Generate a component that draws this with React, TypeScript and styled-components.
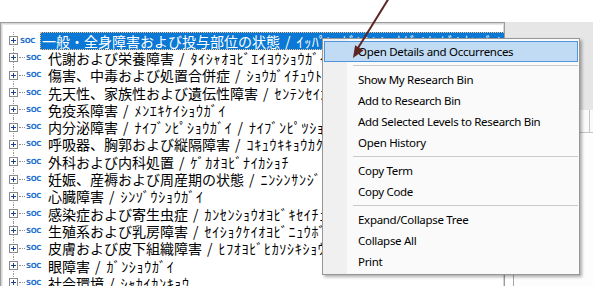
import styled, { createGlobalStyle } from "styled-components";

const GlobalStyle = createGlobalStyle`
  html, body {
    margin: 0;
    padding: 0;
    background: #fff;
  }
  body {
    width: 593px;
    height: 286px;
    overflow: hidden;
  }
`;

type Term = {
  name: string;
  kana: string[];
};

const terms: Term[] = [
  { name: "一般・全身障害および投与部位の状態", kana: ["ｲｯﾊﾟﾝ･ｾﾞﾝｼﾝｼｮｳｶﾞｲｵﾖﾋﾞﾄｳﾖﾌﾞｲﾉｼﾞｮｳﾀｲ"] },
  { name: "代謝および栄養障害", kana: ["ﾀｲｼｬｵﾖﾋﾞｴｲﾖｳｼｮｳｶﾞｲ"] },
  { name: "傷害、中毒および処置合併症", kana: ["ｼｮｳｶﾞｲﾁｭｳﾄﾞｸｵﾖﾋﾞｼｮﾁｶﾞｯﾍﾟｲｼｮｳ"] },
  { name: "先天性、家族性および遺伝性障害", kana: ["ｾﾝﾃﾝｾｲｶｿﾞｸｾｲｵﾖﾋﾞｲﾃﾞﾝｾｲｼｮｳｶﾞｲ"] },
  { name: "免疫系障害", kana: ["ﾒﾝｴｷｹｲｼｮｳｶﾞｲ"] },
  { name: "内分泌障害", kana: ["ﾅｲﾌﾞﾝﾋﾟｼｮｳｶﾞｲ", "ﾅｲﾌﾞﾝﾋﾟﾂｼｮｳｶﾞｲ"] },
  { name: "呼吸器、胸郭および縦隔障害", kana: ["ｺｷｭｳｷｷｮｳｶｸｵﾖﾋﾞｼﾞｭｳｶｸｼｮｳｶﾞｲ"] },
  { name: "外科および内科処置", kana: ["ｹﾞｶｵﾖﾋﾞﾅｲｶｼｮﾁ"] },
  { name: "妊娠、産褥および周産期の状態", kana: ["ﾆﾝｼﾝｻﾝｼﾞｮｸｵﾖﾋﾞｼｭｳｻﾝｷﾉｼﾞｮｳﾀｲ"] },
  { name: "心臓障害", kana: ["ｼﾝｿﾞｳｼｮｳｶﾞｲ"] },
  { name: "感染症および寄生虫症", kana: ["ｶﾝｾﾝｼｮｳｵﾖﾋﾞｷｾｲﾁｭｳｼｮｳ"] },
  { name: "生殖系および乳房障害", kana: ["ｾｲｼｮｸｹｲｵﾖﾋﾞﾆｭｳﾎﾞｳｼｮｳｶﾞｲ"] },
  { name: "皮膚および皮下組織障害", kana: ["ﾋﾌｵﾖﾋﾞﾋｶｿｼｷｼｮｳｶﾞｲ"] },
  { name: "眼障害", kana: ["ｶﾞﾝｼｮｳｶﾞｲ"] },
  { name: "社会環境", kana: ["ｼｬｶｲｶﾝｷｮｳ"] },
];

const menuGroups: string[][] = [
  ["Open Details and Occurrences"],
  ["Show My Research Bin", "Add to Research Bin", "Add Selected Levels to Research Bin", "Open History"],
  ["Copy Term", "Copy Code"],
  ["Expand/Collapse Tree", "Collapse All", "Print"],
];

function PlusBox() {
  return (
    <Expander>
      <svg width="9" height="9" viewBox="0 0 9 9">
        <rect x="0.5" y="0.5" width="8" height="8" fill="#fff" stroke="#8a8a8a" />
        <path d="M2 4.5h5M4.5 2v5" stroke="#1f3f8f" strokeWidth="1" />
      </svg>
    </Expander>
  );
}

function TreeRow({ term, selected }: { term: Term; selected?: boolean }) {
  return (
    <Row>
      <PlusBox />
      <Dots />
      <Soc>SOC</Soc>
      <Label $selected={selected}>
        {term.name}
        {term.kana.map((k) => (
          <span key={k}>
            <Slash>/</Slash>
            <Kana>{k}</Kana>
          </span>
        ))}
      </Label>
    </Row>
  );
}

export default function App() {
  let first = true;
  return (
    <Screen>
      <GlobalStyle />
      <TopStrip />
      <Body>
        <TreePanel>
          <TreeList>
            {terms.map((t, i) => (
              <TreeRow key={t.name} term={t} selected={i === 0} />
            ))}
          </TreeList>
        </TreePanel>
        <RightPanel>
          <Toolbar />
          <GridHeader>
            <HeaderCell />
          </GridHeader>
          <GridBody />
        </RightPanel>
      </Body>

      <Menu>
        {menuGroups.map((group, gi) => (
          <div key={gi}>
            {gi > 0 && <Separator />}
            {group.map((label) => {
              const active = first;
              first = false;
              return (
                <MenuItem key={label} $active={active}>
                  {label}
                </MenuItem>
              );
            })}
          </div>
        ))}
      </Menu>

      <Arrow width="60" height="70" viewBox="0 0 60 70">
        <line x1="40" y1="-2" x2="9" y2="48" stroke="#5e2424" strokeWidth="2" />
        <polygon points="4,58 14.5,50.4 6.1,45.2" fill="#5e2424" />
      </Arrow>
    </Screen>
  );
}

const Screen = styled.div`
  position: relative;
  width: 593px;
  height: 286px;
  overflow: hidden;
  display: flex;
  flex-direction: column;
  background: #fff;
`;

const TopStrip = styled.div`
  height: 22px;
  flex: 0 0 22px;
`;

const Body = styled.div`
  flex: 1;
  display: flex;
  min-height: 0;
`;

const TreePanel = styled.div`
  width: 505px;
  flex: 0 0 505px;
  box-sizing: border-box;
  border: 1px solid #9c9c9c;
  border-bottom: none;
  box-shadow: inset 1px 1px 0 #d6d6d6, inset 2px 2px 0 #e8e8e8, inset -1px 0 0 #d6d6d6;
  overflow: hidden;
  background: #fff;
`;

const TreeList = styled.div`
  padding-top: 9px;
`;

const Row = styled.div`
  position: relative;
  display: flex;
  align-items: center;
  height: 17.3px;
  padding-left: 8px;
  white-space: nowrap;

  &::before {
    content: "";
    position: absolute;
    left: 12px;
    top: 0;
    bottom: 0;
    border-left: 1px dotted #9a9a9a;
  }
`;

const Expander = styled.span`
  position: relative;
  z-index: 1;
  display: flex;
  width: 9px;
  height: 9px;
`;

const Dots = styled.span`
  width: 6px;
  margin-left: 1px;
  border-top: 1px dotted #8a8a8a;
`;

const Soc = styled.span`
  margin-left: 1px;
  font-family: "DejaVu Sans", sans-serif;
  font-weight: bold;
  font-size: 7px;
  letter-spacing: -0.4px;
  color: #1c6fcf;
`;

const Label = styled.span<{ $selected?: boolean }>`
  margin-left: 5px;
  padding: 0 2px;
  height: 18px;
  line-height: 18px;
  font-family: "Noto Sans CJK JP", sans-serif;
  font-size: 14px;
  color: ${({ $selected }) => ($selected ? "#fff" : "#000")};
  background: ${({ $selected }) => ($selected ? "#0a78d4" : "transparent")};
  outline: ${({ $selected }) => ($selected ? "1px dotted #f2c48a" : "none")};
  outline-offset: -1px;
`;

const Slash = styled.span`
  display: inline-block;
  margin: 0 6px 0 5px;
  font-size: 14px;
`;

const Kana = styled.span`
  font-size: 14px;
  letter-spacing: 0.7px;
`;

const RightPanel = styled.div`
  flex: 1;
  display: flex;
  flex-direction: column;
`;

const Toolbar = styled.div`
  height: 88px;
  background: #e6e6e6;
`;

const GridHeader = styled.div`
  height: 22px;
  margin-left: 8px;
  display: flex;
  justify-content: flex-end;
  background: #fafafa;
  border-left: 1px solid #a8a8a8;
  border-bottom: 1px solid #c4c4c4;
`;

const HeaderCell = styled.div`
  width: 3px;
  border-left: 1px solid #c4c4c4;
`;

const GridBody = styled.div`
  flex: 1;
  margin-left: 8px;
  background: #fdfdfd;
  border-left: 1px solid #a8a8a8;
`;

const Arrow = styled.svg`
  position: absolute;
  left: 349px;
  top: 0;
  overflow: visible;
`;

const Menu = styled.div`
  position: absolute;
  left: 322px;
  top: 38px;
  width: 258px;
  box-sizing: border-box;
  padding: 2px 1px;
  border: 1px solid #979797;
  background: linear-gradient(to right, #f0f0f0 0 24px, #fafafa 24px);
  box-shadow: 2px 2px 3px rgba(0, 0, 0, 0.32);
  font-family: "Segoe UI", "Noto Sans", sans-serif;
  font-size: 11.5px;
  letter-spacing: -0.3px;
  color: #000;
`;

const MenuItem = styled.div<{ $active?: boolean }>`
  height: 21px;
  box-sizing: border-box;
  display: flex;
  align-items: center;
  padding-left: 33px;
  border: 1px solid ${({ $active }) => ($active ? "#4f94dc" : "transparent")};
  background: ${({ $active }) => ($active ? "#c0dbf3" : "transparent")};
  white-space: nowrap;
`;

const Separator = styled.div`
  height: 7px;
  margin-left: 29px;
  display: flex;
  align-items: center;

  &::after {
    content: "";
    flex: 1;
    border-top: 1px solid #cacaca;
  }
`;
